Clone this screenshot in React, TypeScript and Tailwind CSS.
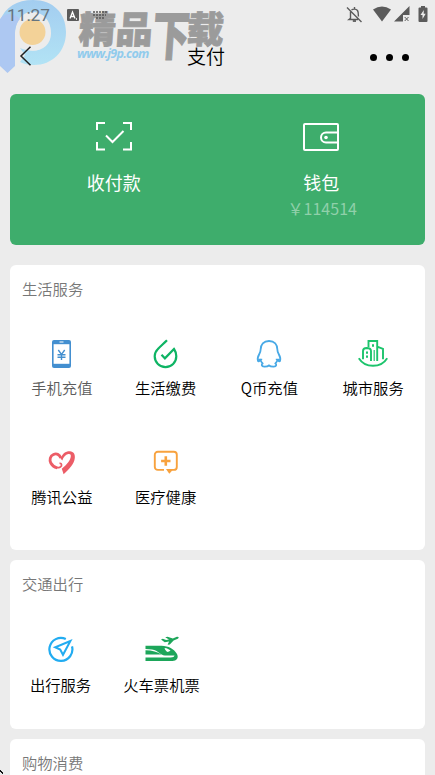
import React from 'react';

type Service = {
  label: string;
  icon: React.ReactNode;
  muted?: boolean;
};

function PhoneIcon() {
  return (
    <svg width="22" height="30" viewBox="0 0 22 30" fill="none">
      <rect x="1" y="1" width="19" height="28" rx="2" fill="#438fd0" />
      <rect x="2.6" y="5.2" width="15.800" height="19.6" fill="#fff" />
      <path d="M8.500 3h4" stroke="#fff" strokeWidth="1" />
      <path d="M7.300 11l3.200 4.300 3.200-4.300M10.500 15.300V21M6.500 15.700h8M6.500 18.300h8" stroke="#438fd0" strokeWidth="1.400" />
    </svg>
  );
}

function BillsIcon() {
  return (
    <svg width="28" height="30" viewBox="0 0 28 30" fill="none" stroke="#0eb464" strokeWidth="2.2">
      <path d="M15 1.2C11.200 5 8.300 7.300 5.700 10.200C3.400 12.500 2.700 15 2.700 17.300A10.800 10.800 0 0 0 24.300 17.300C24.300 14.500 23.600 12.300 22 10L12.900 19.300L9.500 15.800" />
    </svg>
  );
}

function PenguinIcon() {
  return (
    <svg width="28" height="30" viewBox="0 0 28 30" fill="none" stroke="#48a9e6" strokeWidth="1.8" strokeLinejoin="round">
      <path d="M14 2C8.700 2 5.600 5.600 5.600 10.700C5.600 12.500 5.300 13.200 4.300 15C3 17.300 2.300 20 3 22C3.500 22.800 4.500 22.300 5.500 20.800C6 22.700 6.700 23.700 7.700 24.500C6.200 25.300 6.300 27.500 9.200 27.700C11.500 27.800 13 27.400 14 26.300C15 27.400 16.500 27.800 18.800 27.700C21.700 27.500 21.800 25.300 20.300 24.500C21.300 23.700 22 22.700 22.500 20.800C23.500 22.300 24.500 22.800 25 22C25.700 20 25 17.300 23.700 15C22.700 13.200 22.400 12.500 22.400 10.700C22.400 5.600 19.300 2 14 2Z" />
      <path d="M3.200 20.300h4M20.800 20.300h4" strokeWidth="1.3" />
    </svg>
  );
}

function CityIcon() {
  return (
    <svg width="32" height="30" viewBox="0 0 32 30" fill="none" stroke="#1cc46c" strokeWidth="1.9">
      <path d="M1.800 19.200C5 24.300 10 26.800 16 26.800S27 24.300 30.200 19.200" />
      <path d="M6 20.300V12Q6 9.200 9.700 9Q14 9.200 14 12V22M11.500 8V2h8.700v20M20.200 7.600l5.800 2.200v10.500" />
      <path d="M10 12.500v2.300M10 16.500v2.300M16 5.300v2.500" strokeWidth="2" />
      <path d="M17.200 11v11" strokeWidth="1.2" />
    </svg>
  );
}

function HeartIcon() {
  return (
    <svg width="28" height="28" viewBox="0 0 28 28" fill="none" stroke="#ec5d67">
      <path d="M12.800 9C11.500 5.300 8.500 4.200 5.500 5.500C2 7 1.300 11 2.800 14C4 16.400 6.200 18 9.300 19" strokeWidth="2.800" />
      <path d="M8.500 18.700C11.500 18.800 14.200 17.700 13.500 15.600C13.200 14.700 12.300 14.200 11.500 14.500" strokeWidth="1.700" />
      <path
        d="M12.500 9.500C14.200 4.500 17.800 2 22 2.200C25.500 2.500 27.300 5.200 26.800 9C26.300 15 21.500 19.500 15.600 25.300L13.800 19.800C19.300 15.300 22.500 11 22.800 7.300C23 5.400 22 4.600 20.300 5C17.500 5.700 15.500 7.900 14.300 11.500z"
        fill="#ec5d67"
        stroke="none"
      />
    </svg>
  );
}

function MedicalIcon() {
  return (
    <svg width="28" height="28" viewBox="0 0 28 28" fill="none" stroke="#f8a23e" strokeWidth="1.900">
      <path d="M12 20.900H5.800a3 3 0 0 1-3-3V5.800a3 3 0 0 1 3-3h16a3 3 0 0 1 3 3v12.100a3 3 0 0 1-3 3H19.800" />
      <path d="M14 20H21.500l-4.200 4.800z" fill="#f8a23e" stroke="none" />
      <path d="M13.800 7.300v9.400M9.100 12h9.400" strokeWidth="2.600" />
    </svg>
  );
}

function TravelIcon() {
  return (
    <svg className="-mt-[2px]" width="28" height="28" viewBox="0 0 28 28" fill="none" stroke="#22acf1" strokeWidth="2.200">
      <path d="M18.800 3A11.500 11.500 0 1 0 25 10.400" />
      <path d="M23.400 5L8.200 11.200l5 2.300 2.800 5.300z" strokeWidth="2" />
    </svg>
  );
}

function TrainIcon() {
  return (
    <svg className="-mt-[2px]" width="36" height="28" viewBox="0 0 36 28" fill="#1da65a">
      <path d="M1.500 9.800h16c7 .2 12.500 3.200 15.500 8.200c2 3.800-.5 7-4.500 7h-27v-3.600h25c2.600 0 3.800-.7 4-1.900h-9.500c-5 0-6.500-4.900-13-5.900L1.500 13z" />
      <path d="M1.500 14.200c6.800.2 12 1.500 16 4.300h-16z" />
      <path d="M20.500 11.900c2.700.3 4.800 1.300 6 2.800l-2.700 1.200c-1.600-.6-2.600-2-3.300-4z" fill="#fff" />
      <path d="M17 3.600l1.800-.9 3.400 1.400 2.800-.7-3.800-2.200 2.300-.4 5.300 1.600 3.500-1.400c2.300-.6 3.300.6 1.500 1.700l-4.200 1.900-3.800 3.800-2.200.4 1.500-3.200-4.400.6z" />
    </svg>
  );
}

const lifeServices: Service[] = [
  { label: '手机充值', icon: <PhoneIcon />, muted: true },
  { label: '生活缴费', icon: <BillsIcon /> },
  { label: 'Q币充值', icon: <PenguinIcon /> },
  { label: '城市服务', icon: <CityIcon /> },
  { label: '腾讯公益', icon: <HeartIcon /> },
  { label: '医疗健康', icon: <MedicalIcon /> },
];

const travelServices: Service[] = [
  { label: '出行服务', icon: <TravelIcon /> },
  { label: '火车票机票', icon: <TrainIcon /> },
];

function ServiceItem({ label, icon, muted }: Service) {
  return (
    <button type="button" className="flex w-full flex-col items-center">
      <span className="flex h-[30px] items-center justify-center">{icon}</span>
      <span
        className={`mt-[6px] whitespace-nowrap text-[15.3px] font-[350] leading-[24px] ${muted ? 'text-[#5c5c5c]' : 'text-black'}`}
      >
        {label}
      </span>
    </button>
  );
}

function StatusBar() {
  return (
    <div className="flex h-[30px] items-center pl-[7px] pr-[7px] text-[#5b5b5b]">
      <span className="w-[60px] font-[Roboto] text-[17.300px] leading-[30px] text-[#66757f]">11:27</span>
      <span className="flex h-3 w-3 items-center justify-center rounded-[1px] bg-[#5b5b5b]">
        <svg width="12" height="12" viewBox="0 0 12 12" fill="none" stroke="#fff" strokeWidth="1.3">
          <path d="M3 9.500L5.500 3L8 9.500M4 7.500h3M9 10h1" />
        </svg>
      </span>
      <svg className="ml-[12px]" width="18" height="12" viewBox="0 0 18 12" fill="none" stroke="#555" strokeWidth="1.500">
        <path d="M2 3h14M2 6h13M5 9h8" strokeDasharray="2 1" />
      </svg>
      <div className="-mt-[2px] ml-auto flex items-center">
        <svg width="17" height="17" viewBox="0 0 17 17" fill="none" stroke="#5b5b5b" strokeWidth="1.400">
          <path d="M1 1.500l14.500 14.500M5.500 4C7 2.800 10 2.700 11.500 4.500C12.500 6 12.400 8 12.400 10.500M4.500 5.700v6.600L3 13.500h9M8.500 1v2" />
          <path d="M6.800 15h3.200" strokeWidth="1.800" />
        </svg>
        <svg className="ml-[9px]" width="20" height="16" viewBox="0 0 20 16" fill="#5b5b5b">
          <path d="M1 3.500Q10-2.500 19 3.500L10 15.500z" />
        </svg>
        <svg className="ml-[2px]" width="16" height="16" viewBox="0 0 16 16" fill="#5b5b5b">
          <path d="M15.500 0v9H9v6.500H0z" />
          <path d="M10.700 11l3.800 4M14.500 11l-3.800 4" stroke="#5b5b5b" strokeWidth="1" />
        </svg>
        <svg className="ml-[8px]" width="10" height="16" viewBox="0 0 10 16" fill="#5b5b5b">
          <path d="M3 0h4v1.500h1.500q1 0 1 1V15q0 1-1 1h-7q-1 0-1-1V2.500q0-1 1-1H3z" />
          <path d="M5.800 4L2.500 9h2v4l3.200-5.200h-2z" fill="#ececec" />
        </svg>
      </div>
    </div>
  );
}

function Watermark() {
  return (
    <div className="pointer-events-none absolute left-0 top-0 h-[74px] w-[230px]" aria-hidden="true">
      <svg className="absolute left-0 top-0" width="67" height="74" viewBox="0 0 67 74">
        <defs>
          <linearGradient id="ring" x1="0" y1="0" x2="0" y2="1">
            <stop offset="0" stopColor="#a3cdf0" />
            <stop offset="1" stopColor="#b2e3f5" />
          </linearGradient>
        </defs>
        <path
          d="M0 21C5 7 17 0 33 0C53 0 66 13 66 32C66 52 52 65 34 65C28 65 24 64 20 62L25 55L20 48C37 55 51 48 51 33C51 20 43 12 32 12C22 12 16 20 15 33H0z"
          fill="url(#ring)"
        />
        <path d="M0 19C5 12 14 13 20 19C17 22 15 27 15 34V66L7.500 73L0 66z" fill="#adc8f2" />
        <circle cx="33" cy="33" r="17.500" fill="#ececec" />
        <circle cx="32.500" cy="32" r="13" fill="#f3d298" />
      </svg>
      <svg
        className="absolute left-[76px] top-0 overflow-visible font-['Liberation_Sans','Noto_Sans_CJK_SC',sans-serif]"
        width="154"
        height="70"
        viewBox="0 0 154 70"
        fill="#9b9b9b"
        stroke="#9b9b9b"
        strokeWidth=".8"
      >
        <g transform="skewX(-4)" fontSize="37" fontWeight="900">
          <text x="5" y="43">精</text>
          <text x="42" y="43">品</text>
          <text transform="translate(79 55) scale(1 1.430)">下</text>
          <text x="113" y="43">载</text>
        </g>
      </svg>
      <span className="absolute left-[77px] top-[45px] font-['Open_Sans',sans-serif] text-[12.500px] font-bold italic leading-[18px] tracking-[-0.7px] text-[#91cbec]">
        www.j9p.com
      </span>
    </div>
  );
}

export default function App() {
  return (
    <div className="relative h-[775px] w-[435px] overflow-hidden bg-[#ececec] font-['Noto_Sans_CJK_SC',sans-serif]">
      <Watermark />
      <div className="relative">
        <StatusBar />

        {/* Title bar */}
        <header className="flex h-[54px] items-center pl-[19px] pr-[26px]">
          <svg className="-mt-[2px]" width="13" height="20" viewBox="0 0 13 20" fill="none" stroke="#222" strokeWidth="1.500">
            <path d="M11.500 .8L2 10l9.500 9.200" />
          </svg>
          <h1 className="-mt-[2px] ml-[155px] text-[19px] font-[350] leading-[28px] text-black">支付</h1>
          <div className="ml-auto flex gap-[9px]">
            <i className="h-[7px] w-[7px] rounded-full bg-black" />
            <i className="h-[7px] w-[7px] rounded-full bg-black" />
            <i className="h-[7px] w-[7px] rounded-full bg-black" />
          </div>
        </header>
      </div>

      <main className="mt-[10px] flex flex-col pl-[10px] pr-[10px]">
        {/* Money and wallet */}
        <section className="grid h-[151px] grid-cols-2 rounded-md bg-[#3ead6c] pt-[26px] text-white">
          <div className="flex flex-col items-center">
            <svg width="38" height="32" viewBox="0 0 38 32" fill="none" stroke="#fff" strokeWidth="2">
              <path d="M2 10V3h8M28 3h8v7M36 22v7.500H28M10 29.500H2V22M11 15.500l6.500 6.500L28.500 11" />
            </svg>
            <span className="mt-[17px] text-[18px] font-normal leading-[26px]">收付款</span>
          </div>
          <div className="flex flex-col items-center">
            <svg width="38" height="32" viewBox="0 0 38 32" fill="none" stroke="#fff" strokeWidth="2">
              <rect x="2" y="4" width="34" height="26" rx="1" />
              <path d="M36 12.500H24a5 5 0 0 0 0 10h12" />
              <circle cx="24" cy="17.500" r="1.800" fill="#fff" stroke="none" />
            </svg>
            <span className="mt-[17px] text-[18px] font-normal leading-[26px]">钱包</span>
            <span className="pl-[2px] text-[16px] leading-[26px] text-[#90d0aa]">￥114514</span>
          </div>
        </section>

        <section className="mt-5 h-[285px] rounded-md bg-white pt-[11px]">
          <h2 className="pl-3 text-[15.3px] font-[350] leading-[24px] text-[#777]">生活服务</h2>
          <div className="mt-[39px] grid grid-cols-4 gap-y-[49px]">
            {lifeServices.map((s) => (
              <ServiceItem key={s.label} {...s} />
            ))}
          </div>
        </section>

        <section className="mt-[10px] h-[169px] rounded-md bg-white pt-[11px]">
          <h2 className="pl-3 text-[15.3px] font-[350] leading-[24px] text-[#777]">交通出行</h2>
          <div className="mt-[41px] grid grid-cols-[101px_101px]">
            {travelServices.map((s) => (
              <ServiceItem key={s.label} {...s} />
            ))}
          </div>
        </section>

        <section className="mt-[10px] h-[60px] rounded-t-md bg-white pt-[11px]">
          <h2 className="pl-3 text-[15.3px] font-[350] leading-[24px] text-[#777]">购物消费</h2>
        </section>
      </main>

      {/* Pointer tip at the window corner */}
      <svg className="absolute bottom-0 left-0" width="4" height="6" viewBox="0 0 4 6" fill="#111">
        <path d="M0 1h1v1h1v1h1v2h-1v-1h-1v-1h-1z" />
      </svg>
    </div>
  );
}
